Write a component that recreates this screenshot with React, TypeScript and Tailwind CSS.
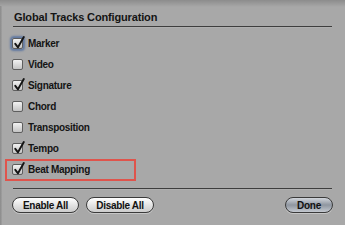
import React from "react";

const items = [
  { label: "Marker", checked: true, focus: true },
  { label: "Video", checked: false },
  { label: "Signature", checked: true },
  { label: "Chord", checked: false },
  { label: "Transposition", checked: false },
  { label: "Tempo", checked: true },
  { label: "Beat Mapping", checked: true, highlight: true },
];

function Check({ checked, focus }: { checked: boolean; focus?: boolean }) {
  return (
    <div
      className={
        "relative w-[11px] h-[11px] rounded-[2px] border border-[#5e5e5e] bg-gradient-to-b from-[#f2f2f2] to-[#c4c4c4] shrink-0 " +
        (focus ? "shadow-[0_0_2px_2px_rgba(80,110,160,0.8)]" : "")
      }
    >
      {checked && (
        <svg
          className="absolute left-[1px] top-[-3px]"
          width="11"
          height="13"
          viewBox="0 0 11 13"
        >
          <path
            d="M1.3 7.8 L4 11.3 L9.8 1"
            fill="none"
            stroke="#141414"
            strokeWidth="1.9"
            strokeLinecap="round"
            strokeLinejoin="round"
          />
        </svg>
      )}
    </div>
  );
}

function Btn({ children, primary, w }: { children: React.ReactNode; primary?: boolean; w: string }) {
  return (
    <div
      className={
        "h-[16px] rounded-full border border-[#3a3a3a] flex items-center justify-center text-[10px] font-bold text-[#111] tracking-[-0.3px] shadow-[0_1px_0_rgba(255,255,255,0.35)] " +
        w +
        (primary
          ? " bg-gradient-to-b from-[#d2d6dc] via-[#8f96a0] to-[#c4c9d0]"
          : " bg-gradient-to-b from-[#ffffff] via-[#e4e4e4] to-[#cccccc]")
      }
    >
      {children}
    </div>
  );
}

export default function App() {
  return (
    <div
      className="w-[345px] h-[225px] bg-[#a8a8a8] relative overflow-hidden"
      style={{ fontFamily: '"Liberation Sans", Arial, sans-serif' }}
    >
      <div className="absolute inset-x-0 top-0 h-[7px] bg-gradient-to-b from-[#8c8c8c] to-[#a8a8a8]" />
      <div className="absolute left-0 top-[6px] bottom-0 w-[2px] bg-gradient-to-r from-[#8a8a8a] to-[#a0a0a0]" />
      <div className="relative flex flex-col pt-[8px]">
        <div className="pl-[14px] text-[11px] font-bold text-[#141414] leading-[18px] tracking-[-0.15px]">
          Global Tracks Configuration
        </div>
        <div className="mx-[13px] h-[1px] bg-[#3e3e3e]" />
        <div className="mx-[13px] h-[1px] bg-[#b4b4b4] opacity-60" />
        <div className="flex flex-col pt-[5px]">
          {items.map((it) => (
            <div key={it.label} className="relative h-[21px] flex items-center gap-[5px] pl-[12px]">
              {it.highlight && (
                <div className="absolute left-[5px] top-[-0.5px] w-[131px] h-[22px] border-2 border-[#df544c]" />
              )}
              <Check checked={it.checked} focus={it.focus} />
              <span className="text-[10px] font-bold text-[#141414] tracking-[-0.3px]">{it.label}</span>
            </div>
          ))}
        </div>
        <div className="mx-[13px] mt-[8px] h-[1px] bg-[#3e3e3e]" />
        <div className="mx-[13px] h-[1px] bg-[#b4b4b4] opacity-60" />
        <div className="flex items-center pl-[12px] pr-[12px] pt-[7px]">
          <Btn w="w-[67px]">Enable All</Btn>
          <div className="w-[7px]" />
          <Btn w="w-[68px]">Disable All</Btn>
          <div className="flex-1" />
          <Btn w="w-[48px]" primary>
            Done
          </Btn>
        </div>
      </div>
    </div>
  );
}
